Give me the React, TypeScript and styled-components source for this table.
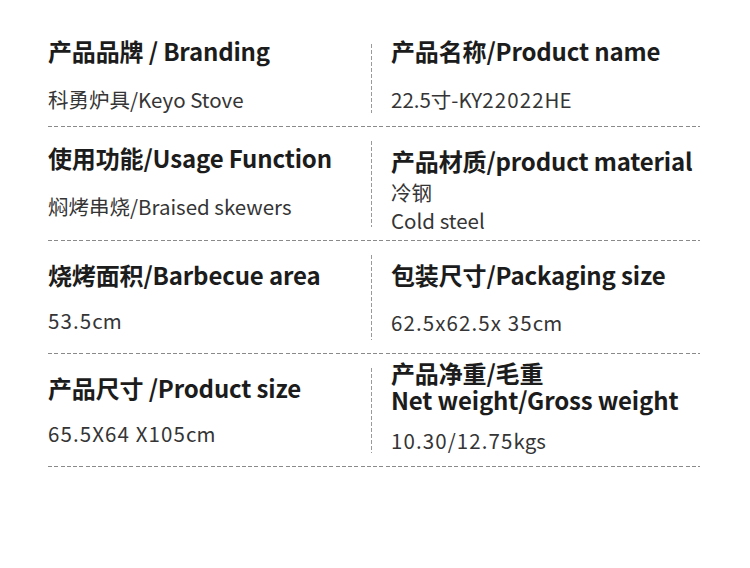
import styled, { createGlobalStyle } from "styled-components";

const GlobalStyle = createGlobalStyle`
  html, body {
    margin: 0;
    padding: 0;
    background: #fff;
  }
  body {
    font-family: "Noto Sans CJK SC", "Noto Sans", sans-serif;
    color: #222;
  }
`;

const Page = styled.div`
  width: 750px;
  height: 568px;
  padding: 30px 50px 0 48px;
  box-sizing: border-box;
`;

const Row = styled.section<{ $h: number }>`
  display: flex;
  height: ${(p) => p.$h}px;
`;

const HLine = styled.div`
  height: 1px;
  background: repeating-linear-gradient(
    to right,
    #8a8a8a 0 4px,
    transparent 4px 6.25px
  );
`;

const VLine = styled.div`
  width: 1px;
  margin: 14px 0 13px;
  background: repeating-linear-gradient(
    to bottom,
    #9a9a9a 0 4px,
    transparent 4px 6px
  );
`;

const Cell = styled.div<{ $left?: boolean; $pt: number }>`
  display: flex;
  flex-direction: column;
  box-sizing: border-box;
  ${(p) => (p.$left ? "width: 323px;" : "flex: 1; padding-left: 19px;")}
  padding-top: ${(p) => p.$pt}px;
`;

const Title = styled.div<{ $mb?: number; $lh?: number }>`
  font-size: 24px;
  font-weight: 700;
  letter-spacing: -0.15px;
  line-height: ${(p) => p.$lh || 30}px;
  color: #1c1c1c;
  white-space: nowrap;
  margin-bottom: ${(p) => p.$mb ?? 0}px;
`;

const Value = styled.div<{ $lh?: number }>`
  font-size: 20.5px;
  line-height: ${(p) => p.$lh || 26}px;
  color: #353535;
  white-space: nowrap;
`;

// digits in the original face run wider than ours
const Num = styled.span`
  letter-spacing: 1.1px;
`;

export default function App() {
  return (
    <>
      <GlobalStyle />
      <Page>
        <Row $h={96}>
          <Cell $left $pt={6}>
            <Title $mb={20}>产品品牌 / Branding</Title>
            <Value>科勇炉具/Keyo Stove</Value>
          </Cell>
          <VLine />
          <Cell $pt={6}>
            <Title $mb={20}>产品名称/Product name</Title>
            <Value>
              22.5寸-KY<Num>22022</Num>HE
            </Value>
          </Cell>
        </Row>
        <HLine />
        <Row $h={113}>
          <Cell $left $pt={16}>
            <Title $mb={20}>使用功能/Usage Function</Title>
            <Value>焖烤串烧/Braised skewers</Value>
          </Cell>
          <VLine />
          <Cell $pt={19}>
            <Title $mb={2}>产品材质/product material</Title>
            <Value $lh={28}>冷钢</Value>
            <Value $lh={28}>Cold steel</Value>
          </Cell>
        </Row>
        <HLine />
        <Row $h={112}>
          <Cell $left $pt={19}>
            <Title $mb={17}>烧烤面积/Barbecue area</Title>
            <Value>
              <Num>53.5</Num>cm
            </Value>
          </Cell>
          <VLine />
          <Cell $pt={19}>
            <Title $mb={19}>包装尺寸/Packaging size</Title>
            <Value>
              <Num>62.5x62.5x 35</Num>cm
            </Value>
          </Cell>
        </Row>
        <HLine />
        <Row $h={112}>
          <Cell $left $pt={19}>
            <Title $mb={17}>产品尺寸 /Product size</Title>
            <Value>
              <Num>65.5X64 X105</Num>cm
            </Value>
          </Cell>
          <VLine />
          <Cell $pt={5}>
            <Title $lh={27} $mb={14}>
              产品净重/毛重
              <br />
              Net weight/Gross weight
            </Title>
            <Value>
              <Num>10.30/12.75</Num>kgs
            </Value>
          </Cell>
        </Row>
        <HLine />
      </Page>
    </>
  );
}
